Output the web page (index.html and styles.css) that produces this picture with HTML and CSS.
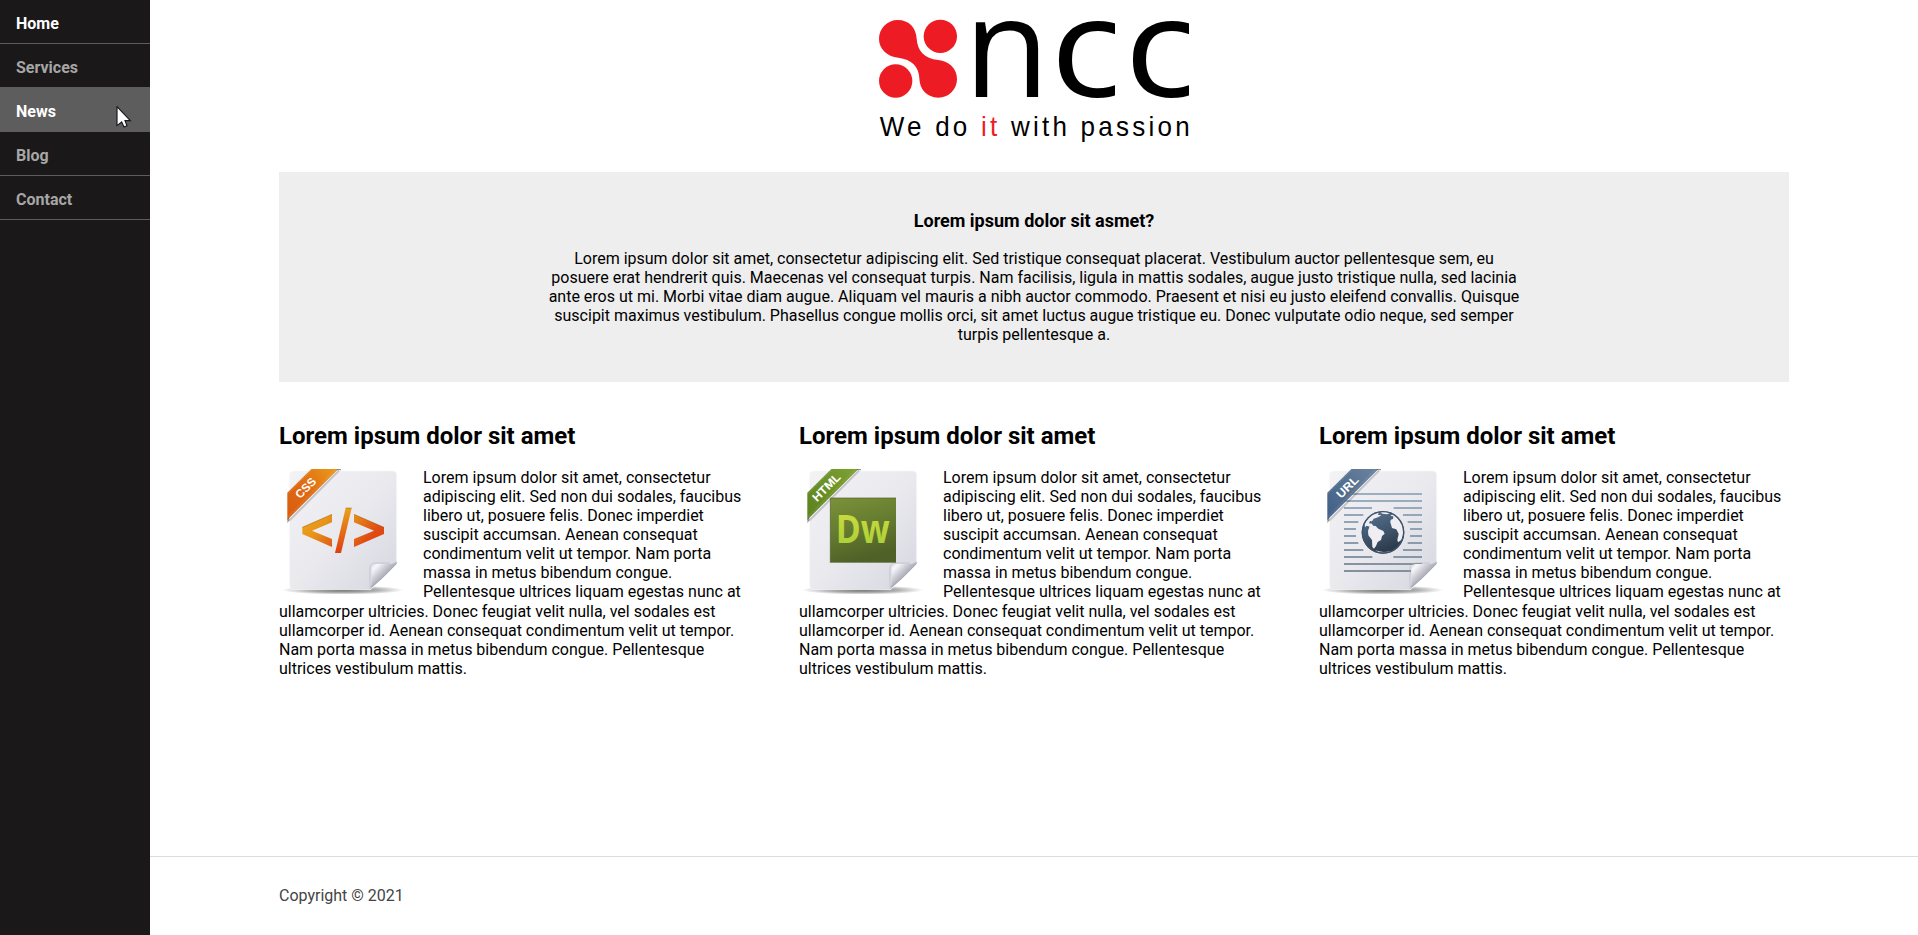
FILE: index.html
```html
<!DOCTYPE html>
<html lang="en">
<head>
<meta charset="utf-8">
<title>NCC</title>
<link rel="stylesheet" href="styles.css">
</head>
<body>
<svg class="defs" width="0" height="0" aria-hidden="true">
  <defs>
    <linearGradient id="paper" x1="0" y1="0" x2="1" y2="1"><stop offset="0" stop-color="#f3f3f6"/><stop offset=".5" stop-color="#e9e9ee"/><stop offset="1" stop-color="#d6d6e0"/></linearGradient>
    <linearGradient id="fold" x1="0" y1="0" x2="1" y2="1"><stop offset="0" stop-color="#c4c4cc"/><stop offset=".22" stop-color="#f8f8fb"/><stop offset=".38" stop-color="#d0d0d9"/><stop offset=".5" stop-color="#b4b4be"/></linearGradient>
    <radialGradient id="shade"><stop offset="0" stop-color="#000" stop-opacity=".6"/><stop offset=".6" stop-color="#000" stop-opacity=".3"/><stop offset="1" stop-color="#000" stop-opacity="0"/></radialGradient>
    <linearGradient id="orange" gradientUnits="userSpaceOnUse" x1="50" y1="160" x2="180" y2="50"><stop offset="0" stop-color="#d95f10"/><stop offset=".5" stop-color="#e06a12"/><stop offset="1" stop-color="#e8921a"/></linearGradient>
    <linearGradient id="code" x1="0" y1="0" x2="0" y2="1"><stop offset="0" stop-color="#eaa01b"/><stop offset="1" stop-color="#de3f12"/></linearGradient>
    <linearGradient id="codeLeft" x1="0" y1="0" x2="1" y2="1"><stop offset="0" stop-color="#eaa51a"/><stop offset=".5" stop-color="#e8941a"/><stop offset="1" stop-color="#e0591a"/></linearGradient>
    <linearGradient id="codeRight" x1="0" y1="0" x2="1" y2="1"><stop offset="0" stop-color="#e69019"/><stop offset=".6" stop-color="#df4d13"/><stop offset="1" stop-color="#dd4012"/></linearGradient>
    <linearGradient id="green" gradientUnits="userSpaceOnUse" x1="50" y1="160" x2="180" y2="50"><stop offset="0" stop-color="#5f8420"/><stop offset=".5" stop-color="#6a9026"/><stop offset="1" stop-color="#7a9e30"/></linearGradient>
    <linearGradient id="moss" x1="0" y1="0" x2=".3" y2="1"><stop offset="0" stop-color="#7b9239"/><stop offset=".5" stop-color="#667c30"/><stop offset="1" stop-color="#4f6127"/></linearGradient>
    <linearGradient id="lime" x1="0" y1="0" x2="0" y2="1"><stop offset="0" stop-color="#d3df3e"/><stop offset="1" stop-color="#a4cc38"/></linearGradient>
    <linearGradient id="blue" gradientUnits="userSpaceOnUse" x1="50" y1="160" x2="180" y2="50"><stop offset="0" stop-color="#44618a"/><stop offset=".5" stop-color="#54708f"/><stop offset="1" stop-color="#667f9c"/></linearGradient>
    <linearGradient id="sea" x1="0" y1="0" x2=".4" y2="1"><stop offset="0" stop-color="#5c7590"/><stop offset=".5" stop-color="#435a74"/><stop offset="1" stop-color="#2d3b4b"/></linearGradient>
    <linearGradient id="rule" gradientUnits="userSpaceOnUse" x1="0" y1="114" x2="0" y2="350"><stop offset="0" stop-color="#9cafc0"/><stop offset="1" stop-color="#82909f"/></linearGradient>
    <clipPath id="nameClip"><path d="M300 0H765V320H300ZM790 0H987V320H790Z"/></clipPath>
    <g id="sheet">
      <ellipse cx="218" cy="405" rx="182" ry="14" fill="url(#shade)"/>
      <path d="M72 48H367Q380 48 380 61V326L302 404H72Q59 404 59 391V61Q59 48 72 48Z" fill="url(#paper)" stroke="#f8f8fa" stroke-width="2"/>
    </g>
    <g id="curl">
      <path d="M380 319Q374 327 358 327H318Q305 327 305 340V380Q305 396 296 404Q330 380 380 326Z" fill="url(#fold)"/>
      <path d="M300 396V340Q300 324 318 324H360" fill="none" stroke="#a4a4ae" stroke-opacity=".4" stroke-width="3"/>
      <path d="M303 397Q345 364 379 325" fill="none" stroke="#9a9aa4" stroke-width="1.5"/>
    </g>
    <path id="band" d="M52 113L124 42H205L52 194Z"/>
    <g id="trim">
      <path d="M203 42H213V46H199ZM52 204V192L58 187V197Z" fill="#000" fill-opacity=".4"/>
      <path d="M58 197L207 47" stroke="#000" stroke-opacity=".18" stroke-width="6"/>
      <path d="M52 118L128 42M52 187L197 42" stroke="#fff" stroke-opacity=".4" stroke-width="1.6" stroke-dasharray="4 2"/>
    </g>
  </defs>
</svg>

<nav class="sidebar">
  <ul class="menu">
    <li><a class="menu-link is-active" href="#">Home</a></li>
    <li><a class="menu-link" href="#">Services</a></li>
    <li><a class="menu-link is-hover" href="#">News</a></li>
    <li><a class="menu-link" href="#">Blog</a></li>
    <li><a class="menu-link" href="#">Contact</a></li>
  </ul>
</nav>

<div class="page">
  <main class="content">
    <header class="brand">
      <svg class="logo" viewBox="42 0 960 450" role="img" aria-label="ncc">
        <g fill="#ed1c24">
          <circle cx="241" cy="109" r="50"/>
          <circle cx="107" cy="243" r="50"/>
          <path d="M57 116A56 56 0 0 1 113 60C148 60 168 84 170 116C172 150 192 176 235 180C267 184 291 205 291 237A56 56 0 0 1 235 293C200 293 179 268 178 235C177 200 155 178 115 173C80 169 57 146 57 116Z"/>
        </g>
        <g class="logo-name" clip-path="url(#nameClip)">
          <text x="312" y="292">n</text>
          <text transform="translate(571 292) scale(1.12 1)">c</text>
          <text transform="translate(793 292) scale(1.12 1)">c</text>
        </g>
        <text class="logo-tagline" transform="translate(59 409) scale(.93 1)" textLength="1000">We do <tspan class="logo-accent">it</tspan> with passion</text>
      </svg>
    </header>

    <section class="hero">
      <h3 class="hero-title">Lorem ipsum dolor sit asmet?</h3>
      <p class="hero-text">Lorem ipsum dolor sit amet, consectetur adipiscing elit. Sed tristique consequat placerat. Vestibulum auctor pellentesque sem, eu posuere erat hendrerit quis. Maecenas vel consequat turpis. Nam facilisis, ligula in mattis sodales, augue justo tristique nulla, sed lacinia ante eros ut mi. Morbi vitae diam augue. Aliquam vel mauris a nibh auctor commodo. Praesent et nisi eu justo eleifend convallis. Quisque suscipit maximus vestibulum. Phasellus congue mollis orci, sit amet luctus augue tristique eu. Donec vulputate odio neque, sed semper turpis pellentesque a.</p>
    </section>

    <section class="columns">
      <article class="column">
        <h2 class="column-title">Lorem ipsum dolor sit amet</h2>
        <svg class="icon" viewBox="27 33 384 384" aria-hidden="true">
          <use href="#sheet"/><use href="#curl"/>
          <use href="#band" fill="url(#orange)"/><use href="#trim"/>
          <text class="ribbon ribbon-wide" transform="translate(90 133) rotate(-45)" textLength="72" lengthAdjust="spacingAndGlyphs">CSS</text>
          <path d="M186 178V202L126 227L186 252V276L97 237V217Z" fill="url(#codeLeft)"/>
          <path d="M227 159H245L213 294H195Z" fill="url(#code)"/>
          <path d="M252 178V202L312 227L252 252V276L342 237V217Z" fill="url(#codeRight)"/>
          <path d="M97 217L186 178M252 178L342 217M227 159H245" fill="none" stroke="#7b4b10" stroke-opacity=".6" stroke-width="2"/>
        </svg>
        <p class="column-text">Lorem ipsum dolor sit amet, consectetur adipiscing elit. Sed non dui sodales, faucibus libero ut, posuere felis. Donec imperdiet suscipit accumsan. Aenean consequat condimentum velit ut tempor. Nam porta massa in metus bibendum congue. Pellentesque ultrices liquam egestas nunc at ullamcorper ultricies. Donec feugiat velit nulla, vel sodales est ullamcorper id. Aenean consequat condimentum velit ut tempor. Nam porta massa in metus bibendum congue. Pellentesque ultrices vestibulum mattis.</p>
      </article>
      <article class="column">
        <h2 class="column-title">Lorem ipsum dolor sit amet</h2>
        <svg class="icon" viewBox="27 33 384 384" aria-hidden="true">
          <use href="#sheet"/><use href="#curl"/>
          <use href="#band" fill="url(#green)"/><use href="#trim"/>
          <text class="ribbon" transform="translate(81 142) rotate(-45)" textLength="104" lengthAdjust="spacingAndGlyphs">HTML</text>
          <rect x="121" y="129" width="197" height="194" fill="url(#moss)"/>
          <path d="M121 323V129H318" fill="none" stroke="#4c5b24" stroke-width="2"/>
          <text class="dw" x="137" y="265" textLength="162" lengthAdjust="spacingAndGlyphs">Dw</text>
        </svg>
        <p class="column-text">Lorem ipsum dolor sit amet, consectetur adipiscing elit. Sed non dui sodales, faucibus libero ut, posuere felis. Donec imperdiet suscipit accumsan. Aenean consequat condimentum velit ut tempor. Nam porta massa in metus bibendum congue. Pellentesque ultrices liquam egestas nunc at ullamcorper ultricies. Donec feugiat velit nulla, vel sodales est ullamcorper id. Aenean consequat condimentum velit ut tempor. Nam porta massa in metus bibendum congue. Pellentesque ultrices vestibulum mattis.</p>
      </article>
      <article class="column">
        <h2 class="column-title">Lorem ipsum dolor sit amet</h2>
        <svg class="icon" viewBox="27 33 384 384" aria-hidden="true">
          <use href="#sheet"/>
          <path d="M102 117H336M102 138H336M102 159H186M251 159H336M102 180H160M279 180H336M102 201H145M293 201H336M102 222H138M300 222H336M102 243H138M300 243H336M102 264H145M293 264H336M102 285H160M279 285H336M102 306H187M250 306H336M102 327H336M102 348H303" fill="none" stroke="url(#rule)" stroke-width="6"/>
          <use href="#curl"/>
          <use href="#band" fill="url(#blue)"/><use href="#trim"/>
          <text class="ribbon" transform="translate(93 132) rotate(-45)" textLength="78" lengthAdjust="spacingAndGlyphs">URL</text>
          <circle cx="219" cy="232" r="64" fill="url(#sea)"/>
          <g fill="#eeeef3">
            <path d="M164 207Q170 188 189 177L207 173L203 179L214 181L204 187L191 191L186 199L180 198L177 205L186 206L190 214L181 216L170 212L165 217Z"/>
            <path d="M178 216Q185 210 197 213L205 221L220 228L224 236L216 243L213 255L203 261L198 273L192 281L187 276L186 255L175 241L174 228Z"/>
            <path d="M241 202Q240 193 249 192L250 184L241 183L247 178Q268 188 276 208Q284 234 274 255L264 262L262 254L266 237L259 223L246 219Z"/>
            <path d="M211 172L227 170L240 175L231 178L217 176ZM196 286Q221 295 244 287L232 293H208Z"/>
          </g>
          <circle cx="219" cy="232" r="62" fill="none" stroke="#3d536a" stroke-width="4"/>
        </svg>
        <p class="column-text">Lorem ipsum dolor sit amet, consectetur adipiscing elit. Sed non dui sodales, faucibus libero ut, posuere felis. Donec imperdiet suscipit accumsan. Aenean consequat condimentum velit ut tempor. Nam porta massa in metus bibendum congue. Pellentesque ultrices liquam egestas nunc at ullamcorper ultricies. Donec feugiat velit nulla, vel sodales est ullamcorper id. Aenean consequat condimentum velit ut tempor. Nam porta massa in metus bibendum congue. Pellentesque ultrices vestibulum mattis.</p>
      </article>
    </section>
  </main>

  <footer class="footer">Copyright © 2021</footer>
</div>

<svg class="pointer" viewBox="0 0 48 69" aria-hidden="true">
  <path d="M3 2V59L17 48L24 63L33 59L27 44H43Z" fill="#fff" stroke="#1c1820" stroke-width="3.5"/>
</svg>
</body>
</html>
```
FILE: styles.css
```css
* {
  box-sizing: border-box;
}

body {
  display: flex;
  height: 100vh;
  margin: 0;
  overflow: hidden;
  background: #fff;
  color: #000;
  font: 16px/19px Roboto, sans-serif;
}

.defs {
  position: absolute;
}

.sidebar {
  flex: 0 0 150px;
  background: #1a1818;
}

.menu {
  margin: 0;
  padding: 0;
  list-style: none;
}

.menu-link {
  display: block;
  height: 44px;
  padding: 14px 16px 10px;
  border-bottom: 1px solid #5d5d5d;
  color: #a6a6a6;
  font-weight: 700;
  text-decoration: none;
}

.menu-link.is-active,
.menu-link.is-hover {
  color: #fff;
}

.menu-link.is-hover {
  background: #5d5d5d;
}

.page {
  display: flex;
  flex: 1;
  flex-direction: column;
}

.content {
  flex: 1;
  padding: 0 129px;
}

.brand {
  display: flex;
  justify-content: center;
  height: 172px;
}

.logo {
  width: 320px;
  height: 150px;
  overflow: visible;
}

.logo-name {
  font: 418px "Open Sans", "Noto Sans", sans-serif;
}

.logo-tagline {
  font: 84px "Liberation Sans", Arial, sans-serif;
}

.logo-accent {
  fill: #ed1c24;
}

.hero {
  height: 210px;
  padding: 38px 265px 0;
  background: #eee;
  text-align: center;
}

.hero-title {
  margin: 0 0 17px;
  font-size: 18px;
  line-height: 22px;
}

.hero-text {
  margin: 0;
}

.columns {
  display: grid;
  grid-template-columns: repeat(3, 1fr);
  gap: 50px;
  padding-top: 40px;
}

.column-title {
  margin: 0 0 16px;
  font-size: 24px;
  line-height: 28px;
}

.icon {
  float: left;
  width: 128px;
  height: 128px;
  margin-right: 16px;
}

.column-text {
  margin: 0;
  padding-top: 1.9px;
  line-height: 19.1px;
}

.ribbon {
  fill: #fff;
  font: bold 35px "Liberation Sans", Arial, sans-serif;
}

.dw {
  fill: url(#lime);
  font: bold 116px "Open Sans", "Noto Sans", sans-serif;
}

.footer {
  height: 79px;
  padding-top: 29px;
  padding-left: 129px;
  border-top: 1px solid #ddd;
  color: #444;
}

.pointer {
  position: absolute;
  top: 106px;
  left: 116px;
  width: 16px;
  height: 23px;
}
```
